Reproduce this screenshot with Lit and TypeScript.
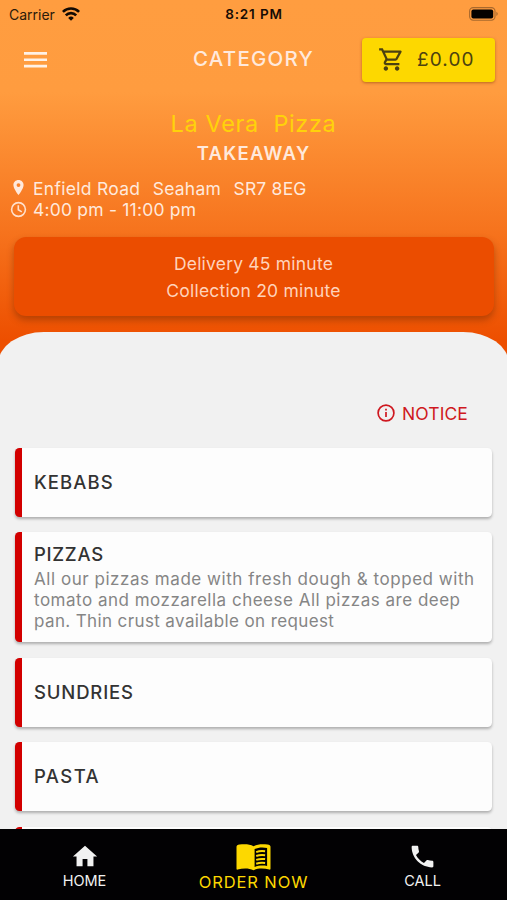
import { LitElement, html, css, nothing } from "lit";

interface Category {
  name?: string;
  spacing?: string;
  lines?: { text: string; spacing: string }[];
}

const CATEGORIES: Category[] = [
  { name: "KEBABS", spacing: "1.1px" },
  {
    name: "PIZZAS",
    spacing: "0.7px",
    lines: [
      { text: "All our pizzas made with fresh dough & topped with", spacing: "0.54px" },
      { text: "tomato and mozzarella cheese All pizzas are deep", spacing: "0.5px" },
      { text: "pan. Thin crust available on request", spacing: "0.38px" },
    ],
  },
  { name: "SUNDRIES", spacing: "0.84px" },
  { name: "PASTA", spacing: "1.4px" },
  {},
];

class AppRoot extends LitElement {
  static styles = css`
    :host {
      display: flex;
      flex-direction: column;
      width: 507px;
      height: 900px;
      overflow: hidden;
      background: #f1f1f1;
      font-family: Inter, "Open Sans", sans-serif;
    }
    * { box-sizing: border-box; }
    svg { display: block; flex: none; }
    .hero {
      flex: none;
      height: 356px;
      background: linear-gradient(#ff9d40 0, #ff9c3f 92px, #f6731d 232px, #ed4f00 340px, #ed4f00 356px);
      color: #ffe9dc;
    }
    .status {
      display: grid;
      grid-template-columns: 1fr auto 1fr;
      align-items: center;
      height: 28px;
      padding: 0 8px 0 9px;
      color: #2b1a0a;
      font-size: 14px;
    }
    .carrier { display: flex; align-items: center; gap: 7px; height: 26px; }
    .clock { font-size: 13.5px; font-weight: 600; letter-spacing: 0.85px; color: #160c04; }
    .battery { justify-self: end; margin-top: -1px; }
    .bar {
      display: grid;
      grid-template-columns: 1fr auto 1fr;
      align-items: center;
      height: 63px;
      padding: 0 12px;
    }
    .menu { margin-left: 12px; }
    .title { font-size: 20.5px; font-weight: 500; letter-spacing: 1.24px; line-height: 26px; padding-bottom: 1px; }
    .cart {
      justify-self: end;
      display: flex;
      align-items: center;
      width: 133px;
      height: 44px;
      padding-left: 16px;
      gap: 12px;
      border-radius: 4px;
      background: #fdd800;
      color: #4c4210;
      font-size: 19px;
      letter-spacing: 1.1px;
      box-shadow: 0 1px 3px rgba(120, 50, 0, 0.5);
    }
    .shop {
      display: flex;
      flex-direction: column;
      align-items: center;
      padding-top: 18px;
    }
    .name { font-size: 23.5px; line-height: 30px; letter-spacing: 0.64px; color: #ffd20a; white-space: pre; }
    .kind { font-size: 18.5px; line-height: 28px; font-weight: 600; letter-spacing: 1.3px; }
    .facts { padding: 11px 0 1px 10px; font-size: 17.5px; }
    .fact { display: flex; align-items: center; height: 21px; gap: 6px; letter-spacing: 0.2px; }
    .address { display: flex; gap: 12.5px; }
    .road { letter-spacing: 0.29px; }
    .times {
      display: flex;
      flex-direction: column;
      align-items: center;
      justify-content: center;
      height: 79px;
      margin: 16px 13px 0 14px;
      padding-right: 1px;
      border-radius: 12px;
      background: #eb4d00;
      color: #ffd3bb;
      font-size: 17.5px;
      line-height: 27px;
      letter-spacing: 0.2px;
      box-shadow: 0 4px 7px rgba(110, 40, 0, 0.45);
    }
    .sheet {
      flex: 1;
      min-height: 0;
      margin: -24px -2px 0;
      padding: 67px 17px 0;
      border-radius: 46px 46px 0 0 / 32px 32px 0 0;
      background: #f1f1f1;
      overflow: hidden;
    }
    .notice {
      display: flex;
      align-items: center;
      justify-content: flex-end;
      gap: 7px;
      height: 28px;
      padding-right: 24px;
      color: #cf1820;
      font-size: 17.5px;
      letter-spacing: 0.1px;
    }
    .list { display: flex; flex-direction: column; gap: 15.8px; padding-top: 21px; }
    .card {
      display: flex;
      flex-direction: column;
      justify-content: center;
      flex: none;
      width: 477px;
      height: 68.5px;
      padding-left: 12px;
      border-left: 7px solid #d20000;
      border-radius: 4.5px;
      background: #fdfdfd;
      box-shadow: 0 2px 3px rgba(0, 0, 0, 0.28);
    }
    .card.tall { height: 110px; padding-bottom: 3px; }
    .card-name { font-size: 18.5px; line-height: 29px; font-weight: 500; color: #333; }
    .line { font-size: 17px; line-height: 20.6px; color: #858585; }
    .nav {
      flex: none;
      display: grid;
      grid-template-columns: repeat(3, 1fr);
      height: 71px;
      background: #020103;
      color: #f1f1f1;
    }
    .tab { display: flex; flex-direction: column; align-items: center; padding-top: 13px; font-size: 14.5px; }
    .tab-text { line-height: 20px; }
    .active { padding-top: 15px; color: #fdd800; font-size: 16.5px; }
    .active .tab-text { letter-spacing: 0.9px; }
  `;

  card(c: Category) {
    return html`<div class=${c.lines ? "card tall" : "card"}>
      ${c.name ? html`<div class="card-name" style="letter-spacing:${c.spacing}">${c.name}</div>` : nothing}
      ${c.lines
        ? c.lines.map((l) => html`<div class="line" style="letter-spacing:${l.spacing}">${l.text}</div>`)
        : nothing}
    </div>`;
  }

  render() {
    return html`
      <header class="hero">
        <div class="status">
          <div class="carrier"><span>Carrier</span><svg width="18" height="14" viewBox="0 0 18 14" fill="none" stroke="#120a03" stroke-width="2.6"><path d="M.9 4.9a11.5 11.5 0 0 1 16.2 0M3.8 8.3a7.3 7.3 0 0 1 10.4 0"/><path d="M9 13.8 6.2 10.9a4 4 0 0 1 5.6 0Z" fill="#120a03" stroke="none"/></svg></div>
          <div class="clock">8:21 PM</div>
          <svg class="battery" width="30" height="14" viewBox="0 0 30 14"><rect x=".6" y=".6" width="25.4" height="12.6" rx="3.6" fill="none" stroke="#a9692d" stroke-width="1.1"/><rect x="2.4" y="2.4" width="21.8" height="9" rx="2" fill="#050200"/><path d="M27.4 4.8c1.8.8 1.8 3.4 0 4.2Z" fill="#a9692d"/></svg>
        </div>
        <div class="bar">
          <svg class="menu" width="23" height="16" viewBox="0 0 23 16" fill="#fff1e6"><path d="M0 0h23v2.7H0zM0 6.4h23v2.7H0zM0 12.8h23v2.7H0z"/></svg>
          <div class="title">CATEGORY</div>
          <div class="cart"><svg width="27" height="27" viewBox="0 0 24 24" fill="#4c4210"><path d="M15.55 13c.75 0 1.41-.41 1.75-1.03l3.58-6.49A.996.996 0 0 0 20.01 4H5.21l-.94-2H1v2h2l3.6 7.59-1.35 2.44C4.52 15.37 5.48 17 7 17h12v-2H7l1.1-2h7.45zM6.16 6h12.15l-2.76 5H8.53L6.16 6zM7 18c-1.1 0-1.99.9-1.99 2S5.9 22 7 22s2-.9 2-2-.9-2-2-2zm10 0c-1.1 0-1.99.9-1.99 2s.89 2 1.99 2 2-.9 2-2-.9-2-2-2z"/></svg><span>£0.00</span></div>
        </div>
        <div class="shop"><div class="name">La Vera  Pizza</div><div class="kind">TAKEAWAY</div></div>
        <div class="facts">
          <div class="fact"><svg width="17" height="17" viewBox="0 0 24 24" fill="#ffe9dc"><path d="M12 0C7.9 0 4.8 3.1 4.8 7.2 4.8 12.5 12 21.5 12 21.5s7.2-9 7.2-14.3C19.2 3.1 16.1 0 12 0zm0 9.9a2.7 2.7 0 1 1 0-5.4 2.7 2.7 0 0 1 0 5.4z"/></svg><div class="address"><span class="road">Enfield Road</span><span>Seaham</span><span>SR7 8EG</span></div></div>
          <div class="fact"><svg width="17" height="17" viewBox="0 0 17 17" fill="none" stroke="#ffe0cc" stroke-width="1.6"><circle cx="8.5" cy="8.5" r="6.9"/><path d="M8.3 4.3v4.5l3.5 2.1"/></svg><span>4:00 pm - 11:00 pm</span></div>
        </div>
        <div class="times"><div>Delivery 45 minute</div><div>Collection 20 minute</div></div>
      </header>
      <main class="sheet">
        <div class="notice"><svg width="18" height="18" viewBox="0 0 18 18" fill="none" stroke="#cf1820" stroke-width="1.7"><circle cx="9" cy="9" r="7.9"/><path d="M9 8v5M9 4.8v1.7"/></svg><span>NOTICE</span></div>
        <div class="list">${CATEGORIES.map((c) => this.card(c))}</div>
      </main>
      <nav class="nav">
        <div class="tab"><svg width="30" height="29" viewBox="0 0 24 24" fill="currentColor"><path d="M10 20v-6h4v6h5v-8h3L12 3 2 12h3v8z"/></svg><div class="tab-text">HOME</div></div>
        <div class="tab active"><svg width="35" height="28" viewBox="0 0 35 28"><path d="M17.5 2.2C14 .2 8.500-.2 3.500.6 1.500.9.5 1.700.5 2.700V24.800c0 .7.500 1 1.200.8 5.300-1.500 11.300-1.500 15.800.6 4.500-2.100 10.500-2.100 15.800-.6.7.2 1.200-.1 1.200-.8V2.700c0-1-1-1.800-3-2.100-5-.8-10.500-.4-14 1.600z" fill="currentColor"/><path d="M18.600 5c3.700-1.800 8.300-2 12.500-1.100v18c-4.200-.7-8.800-.4-12.500 1z" fill="#020103"/><path d="M20.200 8.100c2.600-1 5.600-1.200 8.900-.8M20.200 12c2.600-1 5.600-1.200 8.900-.8M20.200 15.900c2.600-1 5.600-1.200 8.900-.8M20.200 19.800c2.600-1 5.600-1.200 8.900-.8" fill="none" stroke="currentColor" stroke-width="2"/></svg><div class="tab-text">ORDER NOW</div></div>
        <div class="tab"><svg width="31" height="29" viewBox="0 0 24 24" fill="currentColor"><path d="M6.62 10.79c1.44 2.83 3.76 5.14 6.59 6.59l2.2-2.2c.27-.27.67-.36 1.02-.24 1.12.37 2.33.57 3.57.57.55 0 1 .45 1 1V20c0 .55-.45 1-1 1-9.39 0-17-7.61-17-17 0-.55.45-1 1-1h3.5c.55 0 1 .45 1 1 0 1.25.2 2.45.57 3.57.11.35.03.74-.25 1.02l-2.2 2.2z"/></svg><div class="tab-text">CALL</div></div>
      </nav>
    `;
  }
}

customElements.define("app-root", AppRoot);
